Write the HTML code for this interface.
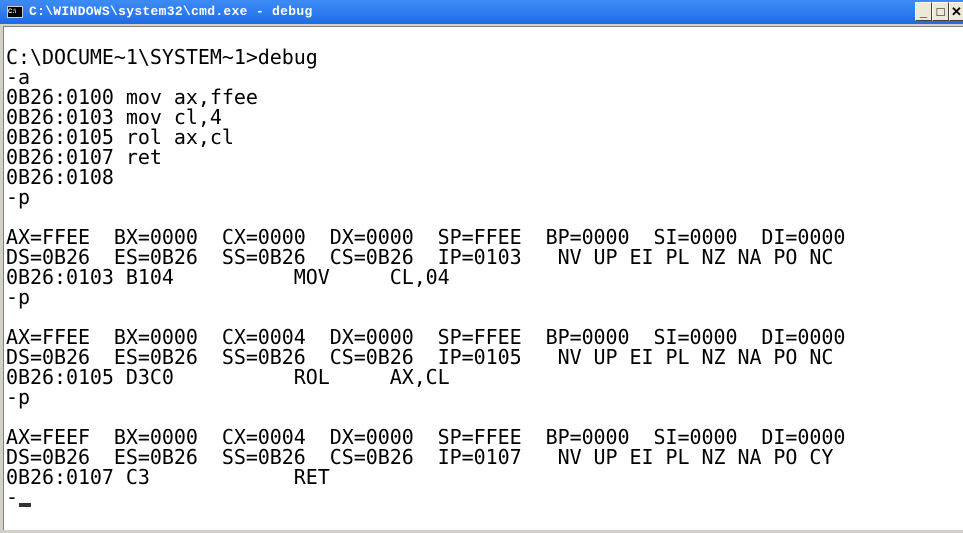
<!DOCTYPE html>
<html><head><style>
body{margin:0;width:963px;height:533px;overflow:hidden;background:#d4d0c8;position:relative;font-family:"DejaVu Sans Mono",monospace}
#tb{position:absolute;left:0;top:0;width:963px;height:24px;background:linear-gradient(#3d8cf5,#2a7af0 60%,#1f6be0)}
#tt{position:absolute;left:29px;top:4px;color:#fff;font:bold 13px "Liberation Mono",monospace;letter-spacing:0.3px}
#ic{position:absolute;left:7px;top:6px;width:14px;height:10px;background:#000;border:1px solid #ccc;color:#fff;font:bold 6px sans-serif;line-height:10px}
.b{position:absolute;top:2px;width:17px;height:19px;background:#ece9d8;border:1px solid #fff;border-right-color:#404040;border-bottom-color:#404040;box-sizing:border-box;font:bold 13px "Liberation Sans";text-align:center;line-height:17px}
#c{position:absolute;left:3px;top:26px;width:960px;height:503px;background:#fff;border-top:1px solid #808080;border-left:1px solid #808080}
pre{margin:0;position:absolute;left:2px;top:0;font:20px/20px "DejaVu Sans Mono",monospace;color:#000;letter-spacing:-0.05px}
#cur{position:absolute;left:15px;top:476px;width:12px;height:4px;background:#333}
</style></head><body>
<div id="tb"><div id="ic">C:\</div><div id="tt">C:\WINDOWS\system32\cmd.exe - debug</div>
<div class="b" style="left:915px">_</div><div class="b" style="left:932px">□</div><div class="b" style="left:949px;width:15px">✕</div></div>
<div id="c"><pre>

C:\DOCUME~1\SYSTEM~1>debug
-a
0B26:0100 mov ax,ffee
0B26:0103 mov cl,4
0B26:0105 rol ax,cl
0B26:0107 ret
0B26:0108
-p

AX=FFEE  BX=0000  CX=0000  DX=0000  SP=FFEE  BP=0000  SI=0000  DI=0000
DS=0B26  ES=0B26  SS=0B26  CS=0B26  IP=0103   NV UP EI PL NZ NA PO NC
0B26:0103 B104          MOV     CL,04
-p

AX=FFEE  BX=0000  CX=0004  DX=0000  SP=FFEE  BP=0000  SI=0000  DI=0000
DS=0B26  ES=0B26  SS=0B26  CS=0B26  IP=0105   NV UP EI PL NZ NA PO NC
0B26:0105 D3C0          ROL     AX,CL
-p

AX=FEEF  BX=0000  CX=0004  DX=0000  SP=FFEE  BP=0000  SI=0000  DI=0000
DS=0B26  ES=0B26  SS=0B26  CS=0B26  IP=0107   NV UP EI PL NZ NA PO CY
0B26:0107 C3            RET
-</pre><div id="cur"></div></div>
</body></html>
